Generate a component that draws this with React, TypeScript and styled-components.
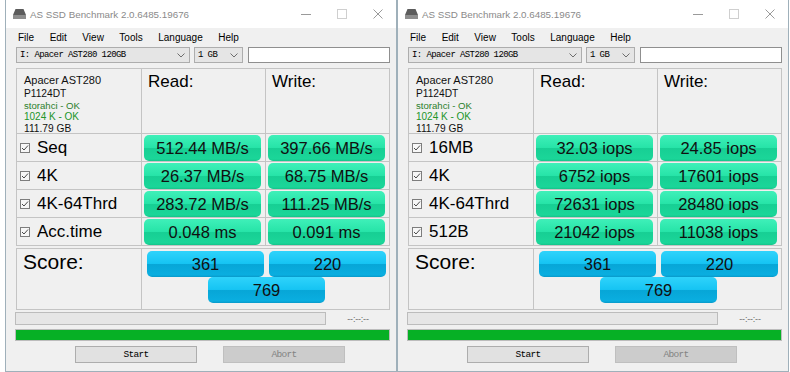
import React from 'react';
import styled, { createGlobalStyle } from 'styled-components';

const GlobalStyle = createGlobalStyle`
  html, body {
    margin: 0;
    padding: 0;
    background: #ffffff;
  }
  body {
    font-family: 'Liberation Sans', Arial, sans-serif;
    color: #000;
  }
  * {
    box-sizing: border-box;
  }
`;

const Desktop = styled.div`
  display: flex;
  padding-left: 5px;
  height: 372px;
  overflow: hidden;
`;

const Window = styled.div`
  width: 392px;
  height: 372px;
  border: 1px solid #9fb0ba;
  border-top: none;
  background: #f0f0f0;
  display: flex;
  flex-direction: column;
`;

const TitleBar = styled.div`
  height: 28px;
  background: #ffffff;
  display: flex;
  align-items: center;
  padding-left: 7px;
`;

const TitleText = styled.span`
  margin-left: 4px;
  font-size: 9.8px;
  color: #8a8a8a;
  flex: 1;
  white-space: nowrap;
`;

const WinButton = styled.div`
  width: 36px;
  height: 28px;
  display: flex;
  align-items: center;
  justify-content: center;
`;

const MenuBar = styled.div`
  height: 18px;
  display: flex;
  align-items: center;
  gap: 15.5px;
  padding-left: 12px;
  font-size: 10px;
`;

const Body = styled.div`
  flex: 1;
  padding: 1px 6px 0 10px;
  display: flex;
  flex-direction: column;
`;

const ComboRow = styled.div`
  height: 16px;
  display: flex;
  gap: 4px;
`;

const Combo = styled.div<{ $width: number }>`
  width: ${(p) => p.$width}px;
  height: 16px;
  border: 1px solid #adadad;
  background: #e5e5e5;
  display: flex;
  align-items: center;
  padding: 0 4px 0 3px;
  font-family: 'Liberation Mono', 'Courier New', monospace;
  font-size: 9px;
  letter-spacing: -0.6px;
  span {
    flex: 1;
    white-space: nowrap;
  }
`;

const TextBox = styled.div`
  flex: 1;
  margin-left: 1px;
  height: 16px;
  border: 1px solid #8f8f8f;
  background: #ffffff;
`;

const ResultGrid = styled.div`
  margin-top: 5px;
  display: grid;
  grid-template-columns: 124px 123px 123px;
  grid-template-rows: 64px repeat(4, 27px);
  gap: 1px;
  background: #c4c4c4;
  border: 1px solid #c4c4c4;
`;

const Cell = styled.div`
  background: #f0f0f0;
`;

const InfoCell = styled(Cell)`
  padding: 4px 0 0 7px;
`;

const InfoLine = styled.div<{ $size: number; $lh: number; $color?: string }>`
  font-size: ${(p) => p.$size}px;
  line-height: ${(p) => p.$lh}px;
  color: ${(p) => p.$color ?? '#101010'};
  white-space: nowrap;
`;

const HeaderCell = styled(Cell)`
  padding: 4px 0 0 6px;
  font-size: 17px;
  line-height: 1;
`;

const LabelCell = styled(Cell)`
  display: flex;
  align-items: center;
  padding-left: 3px;
  gap: 7px;
  font-size: 17px;
`;

const ValueCell = styled(Cell)`
  padding: 1px 0 0 2px;
`;

const GreenBox = styled.div`
  width: 117px;
  height: 26px;
  border-radius: 5px;
  background: linear-gradient(
    to bottom,
    #3ff0b9 0%,
    #27e4a8 48%,
    #17cf94 52%,
    #1bd699 92%,
    #14c48a 100%
  );
  display: flex;
  align-items: center;
  justify-content: center;
  font-size: 16.5px;
  color: #101010;
  white-space: nowrap;
`;

const ScoreBox = styled.div`
  margin-top: 2px;
  display: grid;
  grid-template-columns: 124px 247px;
  height: 62px;
  gap: 1px;
  background: #c4c4c4;
  border: 1px solid #c4c4c4;
`;

const ScoreLabel = styled(Cell)`
  padding: 2px 0 0 6px;
  font-size: 21px;
  line-height: 1;
`;

const ScoreValues = styled(Cell)`
  padding: 2px 0 0 5px;
  display: grid;
  grid-template-columns: 117px 117px;
  grid-auto-rows: 26px;
  column-gap: 5px;
  row-gap: 0;
`;

const BlueBox = styled.div<{ $total?: boolean }>`
  height: 26px;
  width: 117px;
  border-radius: 5px;
  background: linear-gradient(
    to bottom,
    #2fd3fb 0%,
    #16c4f3 48%,
    #07a6d7 52%,
    #0aaee0 92%,
    #0899c9 100%
  );
  display: flex;
  align-items: center;
  justify-content: center;
  font-size: 16.5px;
  color: #101010;
  grid-column: ${(p) => (p.$total ? '1 / span 2' : 'auto')};
  justify-self: center;
`;

const ProgressRow = styled.div`
  margin-top: 2px;
  margin-left: -1px;
  height: 13px;
  display: flex;
  align-items: center;
`;

const Progress = styled.div`
  width: 311px;
  height: 13px;
  border: 1px solid #bcbcbc;
  background: #e6e6e6;
`;

const TimeText = styled.span`
  flex: 1;
  text-align: center;
  font-size: 9px;
  color: #6a6a6a;
  letter-spacing: -0.2px;
`;

const GreenBar = styled.div`
  margin: 4px 0 0 -1px;
  height: 12px;
  border: 1px solid #bcbcbc;
  background: #06b025;
`;

const ButtonRow = styled.div`
  margin-top: 5px;
  display: flex;
  gap: 26px;
  padding-left: 59px;
`;

const Button = styled.div<{ $disabled?: boolean }>`
  width: 122px;
  height: 17px;
  border: 1px solid ${(p) => (p.$disabled ? '#bfbfbf' : '#adadad')};
  background: ${(p) => (p.$disabled ? '#cccccc' : '#e1e1e1')};
  color: ${(p) => (p.$disabled ? '#838383' : '#000')};
  display: flex;
  align-items: center;
  justify-content: center;
  font-family: 'Liberation Mono', 'Courier New', monospace;
  font-size: 9.5px;
  letter-spacing: -0.7px;
`;

function DriveIcon() {
  return (
    <svg width="13" height="10" viewBox="0 0 13 10">
      <polygon points="2.5,0 10.5,0 13,6 0,6" fill="#5c5c5c" />
      <rect x="0" y="6" width="13" height="4" fill="#8d8d8d" />
    </svg>
  );
}

function Arrow() {
  return (
    <svg width="8" height="5" viewBox="0 0 8 5">
      <polyline points="0.5,0.5 4,4 7.5,0.5" fill="none" stroke="#6d6d6d" strokeWidth="1" />
    </svg>
  );
}

function CheckBox() {
  return (
    <svg width="10" height="10" viewBox="0 0 10 10">
      <rect x="0.5" y="0.5" width="9" height="9" fill="#f7f7f7" stroke="#7d7d7d" />
      <polyline points="2,5 4,7 8,2.5" fill="none" stroke="#4a4a4a" strokeWidth="1" />
    </svg>
  );
}

type Row = { label: string; read: string; write: string };

type BenchProps = {
  rows: Row[];
  scores: [string, string, string];
};

function Benchmark({ rows, scores }: BenchProps) {
  return (
    <Window>
      <TitleBar>
        <DriveIcon />
        <TitleText>AS SSD Benchmark 2.0.6485.19676</TitleText>
        <WinButton>
          <svg width="10" height="10" viewBox="0 0 10 10">
            <line x1="0" y1="5.5" x2="10" y2="5.5" stroke="#9a9a9a" />
          </svg>
        </WinButton>
        <WinButton>
          <svg width="10" height="10" viewBox="0 0 10 10">
            <rect x="0.5" y="0.5" width="9" height="9" fill="none" stroke="#cfcfcf" />
          </svg>
        </WinButton>
        <WinButton>
          <svg width="10" height="10" viewBox="0 0 10 10">
            <path d="M0.5 0.5 L9.5 9.5 M9.5 0.5 L0.5 9.5" stroke="#9a9a9a" />
          </svg>
        </WinButton>
      </TitleBar>
      <MenuBar>
        <span>File</span>
        <span>Edit</span>
        <span>View</span>
        <span>Tools</span>
        <span>Language</span>
        <span>Help</span>
      </MenuBar>
      <Body>
        <ComboRow>
          <Combo $width={174}>
            <span>I: Apacer AST280 120GB</span>
            <Arrow />
          </Combo>
          <Combo $width={49}>
            <span>1 GB</span>
            <Arrow />
          </Combo>
          <TextBox />
        </ComboRow>
        <ResultGrid>
          <InfoCell>
            <InfoLine $size={11} $lh={14}>Apacer AST280</InfoLine>
            <InfoLine $size={10.2} $lh={13}>P1124DT</InfoLine>
            <InfoLine $size={9.6} $lh={11} $color="#2b7f2b">storahci - OK</InfoLine>
            <InfoLine $size={10} $lh={12} $color="#22952a">1024 K - OK</InfoLine>
            <InfoLine $size={10.2} $lh={12}>111.79 GB</InfoLine>
          </InfoCell>
          <HeaderCell>Read:</HeaderCell>
          <HeaderCell>Write:</HeaderCell>
          {rows.map((r) => (
            <React.Fragment key={r.label}>
              <LabelCell>
                <CheckBox />
                <span>{r.label}</span>
              </LabelCell>
              <ValueCell>
                <GreenBox>{r.read}</GreenBox>
              </ValueCell>
              <ValueCell>
                <GreenBox>{r.write}</GreenBox>
              </ValueCell>
            </React.Fragment>
          ))}
        </ResultGrid>
        <ScoreBox>
          <ScoreLabel>Score:</ScoreLabel>
          <ScoreValues>
            <BlueBox>{scores[0]}</BlueBox>
            <BlueBox>{scores[1]}</BlueBox>
            <BlueBox $total>{scores[2]}</BlueBox>
          </ScoreValues>
        </ScoreBox>
        <ProgressRow>
          <Progress />
          <TimeText>--:--:--</TimeText>
        </ProgressRow>
        <GreenBar />
        <ButtonRow>
          <Button>Start</Button>
          <Button $disabled>Abort</Button>
        </ButtonRow>
      </Body>
    </Window>
  );
}

const seqRows: Row[] = [
  { label: 'Seq', read: '512.44 MB/s', write: '397.66 MB/s' },
  { label: '4K', read: '26.37 MB/s', write: '68.75 MB/s' },
  { label: '4K-64Thrd', read: '283.72 MB/s', write: '111.25 MB/s' },
  { label: 'Acc.time', read: '0.048 ms', write: '0.091 ms' },
];

const iopsRows: Row[] = [
  { label: '16MB', read: '32.03 iops', write: '24.85 iops' },
  { label: '4K', read: '6752 iops', write: '17601 iops' },
  { label: '4K-64Thrd', read: '72631 iops', write: '28480 iops' },
  { label: '512B', read: '21042 iops', write: '11038 iops' },
];

export default function App() {
  return (
    <>
      <GlobalStyle />
      <Desktop>
        <Benchmark rows={seqRows} scores={['361', '220', '769']} />
        <Benchmark rows={iopsRows} scores={['361', '220', '769']} />
      </Desktop>
    </>
  );
}
